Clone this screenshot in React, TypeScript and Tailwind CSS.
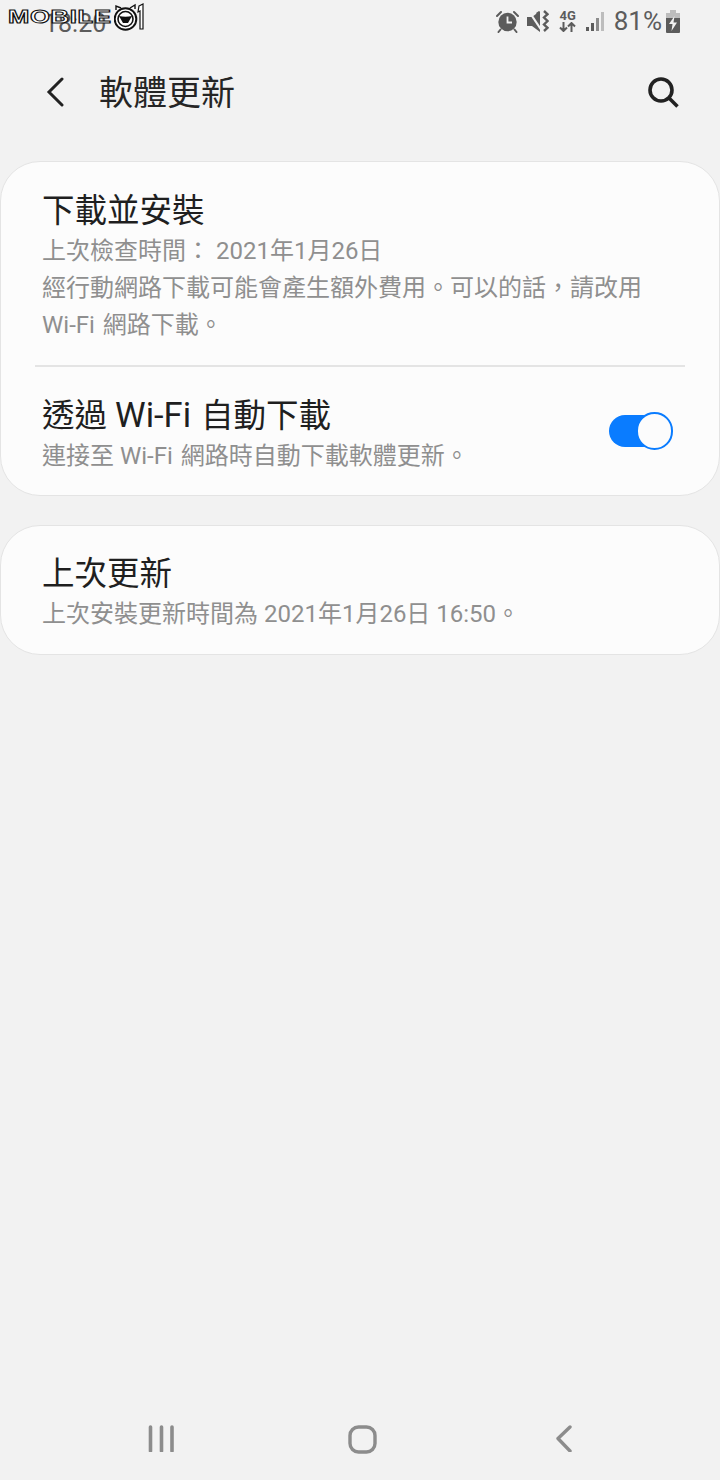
import React from 'react';

const FONT = "font-['Roboto','Noto_Sans_CJK_TC',sans-serif]";

const StatusIcons = () => (
  <div className="flex items-center">
    {/* alarm */}
    <svg width="23" height="23" viewBox="0 0 23 23">
      <circle cx="11.5" cy="12" r="9.2" fill="#5c5c5c" />
      <path d="M11.5 6.5v6h4.5" fill="none" stroke="#f2f2f2" strokeWidth="1.8" />
      <path d="M1 6l4-4M22 6l-4-4M4.5 19.5l-2 2.5M18.5 19.5l2 2.5" stroke="#5c5c5c" strokeWidth="2" strokeLinecap="round" />
    </svg>
    {/* vibrate / mute */}
    <svg width="22" height="23" viewBox="0 0 22 23" className="ml-[8px]">
      <path d="M0 7h5l8-6v21l-8-6H0z" fill="#5c5c5c" />
      <path d="M1 0l14 21" stroke="#f2f2f2" strokeWidth="2.2" />
      <path d="M9 3l3-2v6z" fill="#5c5c5c" />
      <path d="M17 1l3.5 3.2-3.5 3.3 3.5 3.5-3.5 3.5 3.5 3.3-3.5 3.2" fill="none" stroke="#5c5c5c" strokeWidth="2.4" />
    </svg>
    <div className="ml-[10px] flex w-[18px] flex-col items-center">
      <span className="font-['Roboto',sans-serif] text-[13px] leading-[11px] font-bold text-[#5c5c5c]">4G</span>
      <svg width="17" height="10" viewBox="0 0 17 10" className="mt-[1px]">
        <path d="M4.5 0v9M1 5.5l3.5 3.5L8 5.5M12.5 10V1M9 4.5L12.5 1 16 4.5" fill="none" stroke="#5c5c5c" strokeWidth="2" />
      </svg>
    </div>
    {/* signal */}
    <svg width="20" height="21" viewBox="0 0 20 21" className="ml-[9px]">
      <rect x="0" y="16" width="3" height="4" fill="#5c5c5c" />
      <rect x="5" y="12" width="3" height="8" fill="#5c5c5c" />
      <rect x="10" y="7" width="3" height="13" fill="#8c8c8c" />
      <rect x="15" y="1" width="3" height="19" fill="#bdbdbd" />
    </svg>
    <span className="ml-[8px] font-['Roboto',sans-serif] text-[26px] leading-[32px] text-[#5c5c5c]">81%</span>
    {/* battery charging */}
    <svg width="16" height="23" viewBox="0 0 16 23" className="ml-[3px]">
      <path d="M5 0h6v3h4v6H1V3h4z" fill="#bdbdbd" />
      <path d="M1 8h14v14a1 1 0 0 1-1 1H2a1 1 0 0 1-1-1z" fill="#5c5c5c" />
      <path d="M9.5 6L4 14h3.5l-1 7L12 12.5H8.5z" fill="#f2f2f2" />
    </svg>
  </div>
);

const Logo = () => (
  <div className="absolute top-[3px] left-[8px] flex items-center">
    <span className="w-[106px] origin-left scale-x-[1.42] font-['Liberation_Sans',sans-serif] text-[18px] leading-[28px] font-bold tracking-[0.5px] text-white [-webkit-text-stroke:1px_#111]">
      MOBILE
    </span>
    <svg width="32" height="28" viewBox="0 0 32 28">
      <circle cx="11.5" cy="16" r="10.8" fill="#fff" stroke="#111" strokeWidth="2" />
      <circle cx="11.5" cy="16" r="7.5" fill="none" stroke="#111" strokeWidth="1.6" />
      <path d="M5 13c4 1 9 1 13 0l-4 7H9z" fill="#111" />
      <path d="M2 7l0-4 5 2M16 5l5-3 0 4" fill="#fff" stroke="#111" strokeWidth="1.4" />
      <path d="M25 3l4-2v25h-3V8l-2 1z" fill="#fff" stroke="#111" strokeWidth="1.2" />
    </svg>
  </div>
);

const Toggle = () => (
  <div className="relative mb-[9px] h-[32px] w-[64px]">
    <div className="h-[32px] w-[50px] rounded-full bg-[#0a7cff]" />
    <div className="absolute top-[-3px] left-[27px] h-[38px] w-[37px] rounded-full border-2 border-[#0a7cff] bg-[#fcfcfc]" />
  </div>
);

export default function App() {
  return (
    <div className={`${FONT} relative flex h-[1480px] w-[720px] flex-col overflow-hidden bg-[#f2f2f2]`}>
      {/* status bar */}
      <div className="flex h-[42px] items-start justify-between pt-[5px] pr-[39px]">
        <span className="mt-[3px] ml-[44px] text-[25px] leading-[32px] text-[#5c5c5c]">18:20</span>
        <StatusIcons />
      </div>
      <Logo />

      {/* app bar */}
      <div className="flex h-[100px] items-center justify-between pr-[40px] pl-[46px]">
        <div className="flex items-center">
          <svg width="18" height="30" viewBox="0 0 18 30">
            <path d="M16 2L3 15l13 13" fill="none" stroke="#222" strokeWidth="3" strokeLinecap="round" />
          </svg>
          <h1 className="mt-[1px] ml-[35px] text-[34px] leading-[44px] font-normal text-[#252525]">軟體更新</h1>
        </div>
        <svg width="33" height="33" viewBox="0 0 33 33">
          <circle cx="14" cy="14" r="11" fill="none" stroke="#222" strokeWidth="3.6" />
          <path d="M22 22l8.5 8.5" stroke="#222" strokeWidth="3.6" />
        </svg>
      </div>

      {/* cards */}
      <div className="mt-[19px] flex flex-col gap-[29px]">
        <section className="h-[335px] rounded-[40px] border border-[#e4e4e4] bg-[#fcfcfc]">
          <div className="h-[203px] px-[41px] pt-[29px]">
            <h2 className="text-[32.5px] leading-[40px] font-normal text-[#1f1f1f]">下載並安裝</h2>
            <p className="mt-[2px] text-[24px] leading-[37px] text-[#8f8f8f]">上次檢查時間： 2021年1月26日</p>
            <p className="text-[24px] leading-[37px] text-[#8f8f8f]">
              經行動網路下載可能會產生額外費用。可以的話，請改用<br />
              <span className="mr-[2px]">Wi-Fi</span> 網路下載。
            </p>
          </div>
          <div className="mx-[34px] h-[2px] bg-[#e4e4e4]" />
          <div className="flex items-center justify-between pt-[28px] pr-[46px] pl-[41px]">
            <div>
              <h2 className="text-[32.5px] leading-[42px] font-normal text-[#1f1f1f]">
                透過 <span className="mr-[2px] text-[34.5px] leading-none">Wi-Fi</span> 自動下載
              </h2>
              <p className="mt-[1px] text-[24px] leading-[37px] text-[#8f8f8f]">
                連接至 <span className="mr-[2px]">Wi-Fi</span> 網路時自動下載軟體更新。
              </p>
            </div>
            <Toggle />
          </div>
        </section>
        <section className="h-[130px] rounded-[40px] border border-[#e4e4e4] bg-[#fcfcfc] px-[41px] pt-[27px]">
          <h2 className="text-[32.5px] leading-[42px] font-normal text-[#1f1f1f]">上次更新</h2>
          <p className="mt-[1px] text-[24px] leading-[37px] text-[#8f8f8f]">上次安裝更新時間為 2021年1月26日 16:50。</p>
        </section>
      </div>

      {/* navigation bar */}
      <div className="mt-auto flex h-[80px] items-start pt-[25px] pl-[148px]">
        <svg width="27" height="27" viewBox="0 0 27 27">
          <path d="M2.5 2v24M13.5 2v24M24 2v24" stroke="#8c8c8c" strokeWidth="3.6" strokeLinecap="round" />
        </svg>
        <svg width="29" height="29" viewBox="0 0 29 29" className="ml-[173px]">
          <rect x="2" y="2" width="25" height="25" rx="8.5" fill="none" stroke="#8c8c8c" strokeWidth="3.4" />
        </svg>
        <svg width="18" height="27" viewBox="0 0 18 27" className="ml-[178px]">
          <path d="M15 2L3 13.5 15 26" fill="none" stroke="#8c8c8c" strokeWidth="3.4" strokeLinecap="round" strokeLinejoin="round" />
        </svg>
      </div>
    </div>
  );
}
